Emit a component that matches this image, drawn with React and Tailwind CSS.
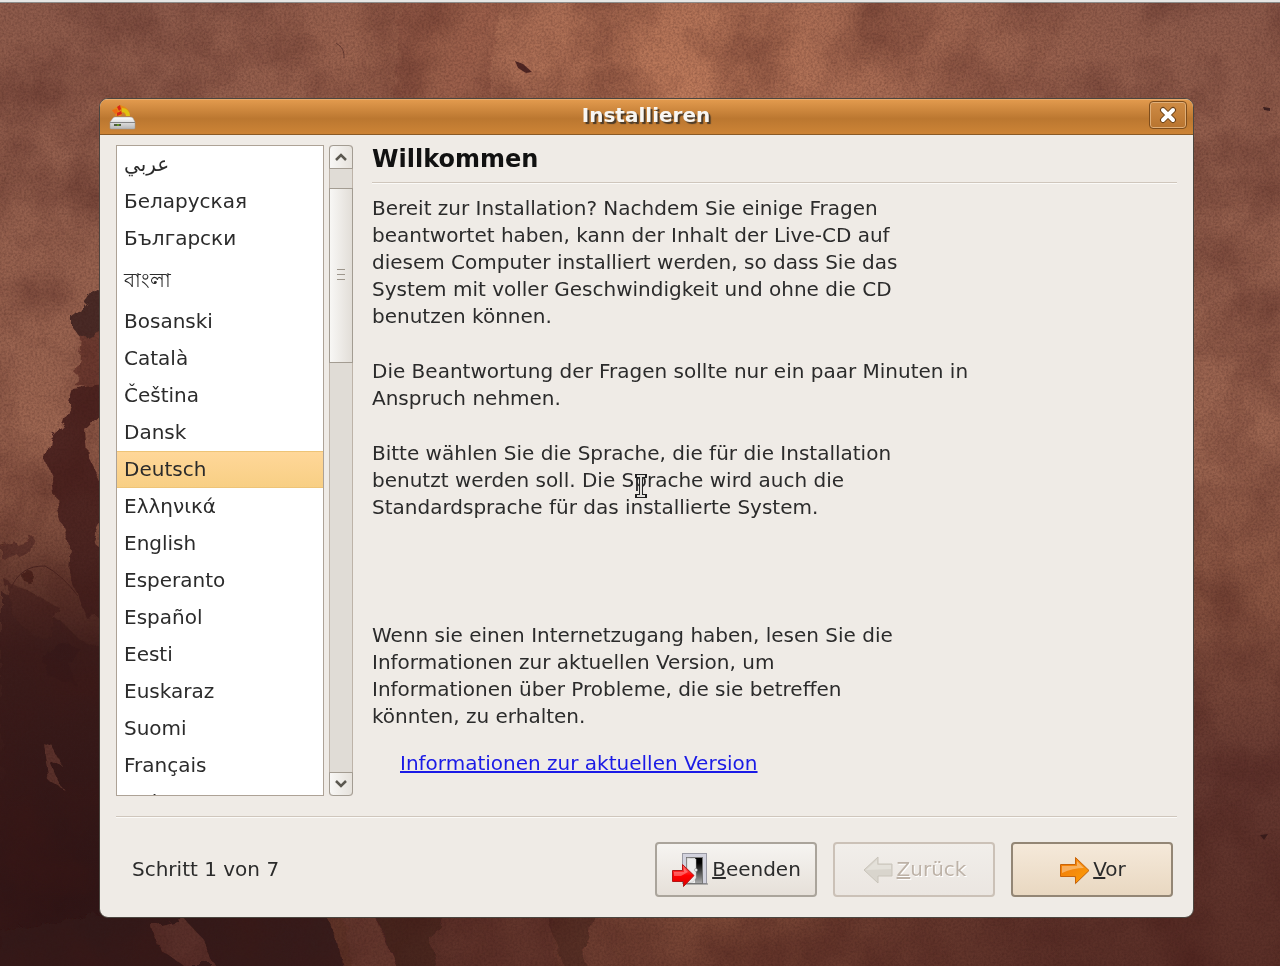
import React, { useState } from "react";

const languages = [
  "عربي",
  "Беларуская",
  "Български",
  "বাংলা",
  "Bosanski",
  "Català",
  "Čeština",
  "Dansk",
  "Deutsch",
  "Ελληνικά",
  "English",
  "Esperanto",
  "Español",
  "Eesti",
  "Euskaraz",
  "Suomi",
  "Français",
  "Galego",
];

function Wallpaper() {
  return (
    <svg
      className="absolute inset-0 h-full w-full"
      viewBox="0 0 1280 966"
      preserveAspectRatio="none"
      aria-hidden="true"
    >
      <defs>
        <linearGradient id="base" x1="0" y1="0" x2="0" y2="1">
          <stop offset="0" stopColor="#8e5b4b" />
          <stop offset="0.45" stopColor="#9d6651" />
          <stop offset="0.62" stopColor="#8a5542" />
          <stop offset="0.8" stopColor="#653830" />
          <stop offset="1" stopColor="#5a2f27" />
        </linearGradient>
        <radialGradient id="glow" gradientUnits="userSpaceOnUse" cx="680" cy="110" r="520">
          <stop offset="0" stopColor="#c07c5c" />
          <stop offset="0.5" stopColor="#ab6d54" stopOpacity="0.7" />
          <stop offset="1" stopColor="#9b614c" stopOpacity="0" />
        </radialGradient>
        <radialGradient id="glowBottom" gradientUnits="userSpaceOnUse" cx="720" cy="900" r="360">
          <stop offset="0" stopColor="#7e4a38" />
          <stop offset="1" stopColor="#6b3b2f" stopOpacity="0" />
        </radialGradient>
        <radialGradient id="shade" gradientUnits="userSpaceOnUse" cx="60" cy="900" r="420">
          <stop offset="0" stopColor="#2e1415" />
          <stop offset="0.6" stopColor="#371a19" stopOpacity="0.85" />
          <stop offset="1" stopColor="#4a241f" stopOpacity="0" />
        </radialGradient>
        <filter id="grain" x="0" y="0" width="100%" height="100%" colorInterpolationFilters="sRGB">
          <feTurbulence type="fractalNoise" baseFrequency="0.45" numOctaves="2" seed="4" />
          <feColorMatrix values="0 0 0 0 0.2  0 0 0 0 0.08  0 0 0 0 0.07  0.5 0 0 0 -0.17" />
        </filter>
        <filter id="cloud" x="0" y="0" width="100%" height="100%" colorInterpolationFilters="sRGB">
          <feTurbulence type="fractalNoise" baseFrequency="0.014" numOctaves="5" seed="9" />
          <feColorMatrix values="0 0 0 0 0.25  0 0 0 0 0.09  0 0 0 0 0.08  0.8 0 0 0 -0.3" />
        </filter>
        <filter id="rough" x="-10%" y="-10%" width="120%" height="120%">
          <feTurbulence type="fractalNoise" baseFrequency="0.06" numOctaves="3" seed="2" />
          <feDisplacementMap in="SourceGraphic" scale="14" />
        </filter>
      </defs>
      <rect width="1280" height="966" fill="url(#base)" />
      <rect width="1280" height="966" fill="url(#glow)" />
      <rect width="1280" height="966" fill="url(#glowBottom)" />
      <path d="M400 0H500L490 110H395Z" fill="#7b4236" opacity="0.25" filter="url(#rough)" />
      <g filter="url(#rough)">
        <path d="M0 590L22 600L40 618L62 622L80 640L110 650V966H0Z" fill="#46211e" opacity="0.8" />
        <path d="M5 580L30 592L60 608L48 640L28 632L10 612Z" fill="#603329" />
        <path d="M95 288L110 290V335L83 340L71 326L71 316L79 310Z" fill="#4a2a26" />
        <path d="M82 338L110 324V391L76 386L80 356Z" fill="#703c31" />
        <path
          d="M74 390L110 384V406L86 431L88 456L100 481L110 506L92 541L110 556V616L88 620L79 596L68 571L70 546L58 511L54 481L46 461L50 438L64 424Z"
          fill="#502723"
        />
        <path d="M0 546L34 536L30 552L14 560L0 558Z" fill="#6b3a30" />
        <circle cx="29" cy="577" r="6" fill="#54281f" />
        <path d="M50 650L62 642L82 650L70 665L76 685L60 680L44 672Z" fill="#35191a" />
      </g>
      <rect width="1280" height="966" fill="url(#shade)" />
      <g filter="url(#rough)">
        <path d="M0 930L100 915H345L352 970H0Z" fill="#331817" opacity="0.7" />
        <path d="M152 926L184 918L202 938L216 966L184 966L160 950Z" fill="#6b3d33" opacity="0.7" />
        <path d="M325 915H375L398 970H345L340 945Z" fill="#764335" opacity="0.6" />
        <path d="M376 915H440L432 945L436 970H398Z" fill="#42211d" opacity="0.7" />
        <path d="M440 915H550L560 970H440Z" fill="#5c3128" opacity="0.5" />
        <path d="M546 915H594L590 940L582 950L590 970H566Z" fill="#4a241f" opacity="0.6" />
        <path d="M42 742L52 745L64 768L50 762L62 788L48 780Z" fill="#6b3d33" opacity="0.7" />
      </g>
      <path d="M10 590Q20 565 45 566Q62 575 78 596" fill="none" stroke="#4b2521" />
      <path d="M336 43Q345 48 344 58" fill="none" stroke="#643a31" />
      <path d="M515 61L523 64L532 72L526 73L518 68Z" fill="#4f2623" />
      <path d="M1263 107L1270 108L1270 111L1264 110Z" fill="#3e2222" />
      <path d="M1260 835L1268 834L1264 840Z" fill="#391c1b" />
      <rect width="1280" height="966" filter="url(#cloud)" />
      <rect width="1280" height="966" filter="url(#grain)" />
    </svg>
  );
}

function InstallerIcon() {
  return (
    <svg width="28" height="28" viewBox="0 0 28 28" aria-hidden="true">
      <defs>
        <linearGradient id="drive" x1="0" y1="0" x2="0" y2="1">
          <stop offset="0" stopColor="#ffffff" />
          <stop offset="1" stopColor="#b5b5b5" />
        </linearGradient>
      </defs>
      <path d="M6 4L11 1L16 3Q21 6 21 12H17L14 8L12 12H6L7 9L3 7Z" fill="#e58a16" />
      <path d="M3 6L8 5L9 9L6 10Z" fill="#ee6b13" />
      <path d="M8 3L11 1L12 5L10 7Z M8 9L12 7L13 10L8 12Z" fill="#d92617" />
      <path d="M13 4Q20 4 21 12H17Q17 8 13 8Z" fill="#dfc312" />
      <path d="M4 14Q5 13 6 13H21Q23 13 24 14L26 18V24Q26 25 25 25H2Q1 25 1 24V18Z" fill="url(#drive)" stroke="#999" strokeWidth="0.5" />
      <path d="M1 18H26V19H1Z" fill="#858585" />
      <path d="M5 20H12V22H5Z" fill="#4d5d3b" />
      <path d="M8 20.5H10V21.5H8Z" fill="#79c614" />
    </svg>
  );
}

function ExitIcon() {
  return (
    <svg width="38" height="38" viewBox="0 0 38 38" aria-hidden="true">
      <defs>
        <linearGradient id="dark" x1="0" y1="0" x2="0" y2="1">
          <stop offset="0.2" stopColor="#000" />
          <stop offset="1" stopColor="#aaa" />
        </linearGradient>
        <linearGradient id="red" x1="0" y1="0" x2="0" y2="1">
          <stop offset="0" stopColor="#f66" />
          <stop offset="0.5" stopColor="#f00" />
          <stop offset="1" stopColor="#d00" />
        </linearGradient>
      </defs>
      <rect x="11.5" y="2.5" width="24" height="30" fill="#d3d3de" stroke="#9a9aa4" />
      <rect x="15.5" y="6.5" width="16" height="26" fill="#eee" stroke="#777" />
      <rect x="24" y="7" width="7" height="25" fill="url(#dark)" />
      <path d="M16 7L25 8V27L22 31L16 32Z" fill="#ececec" stroke="#bbb" strokeWidth="0.5" />
      <circle cx="25" cy="19" r="1.5" fill="#fff" stroke="#777" strokeWidth="0.5" />
      <path d="M12 33H37" stroke="#777" />
      <path d="M1.500 19.500H11.500V13.500L23 24.500L12.500 35.500V30.500H1.500Z" fill="url(#red)" stroke="#b41414" />
      <path d="M3 21H13V17L17 21L10 25H3Z" fill="#fff" opacity="0.3" />
    </svg>
  );
}

function BackIcon() {
  return (
    <svg width="32" height="32" viewBox="0 0 32 32" aria-hidden="true">
      <path d="M2 16L16 3V10H30V22H16V29Z" fill="#d9d5cd" stroke="#c9c4ba" />
      <path d="M4 16L15 6V11H29V15Z" fill="#e4e1da" />
    </svg>
  );
}

function ForwardIcon() {
  return (
    <svg width="32" height="32" viewBox="0 0 32 32" aria-hidden="true">
      <defs>
        <linearGradient id="orange" x1="0" y1="0" x2="1" y2="1">
          <stop offset="0" stopColor="#f57900" />
          <stop offset="0.5" stopColor="#f58a0c" />
          <stop offset="1" stopColor="#ffa000" />
        </linearGradient>
      </defs>
      <path d="M3 12L18 25L17 31L30 18" fill="#000" opacity="0.12" />
      <path d="M2.500 10.500H17.500V3.500L31 16.500L17.500 29.500V22.500H2.500Z" fill="url(#orange)" stroke="#c8640a" />
      <path d="M4 12H19V7L26 14Q15 14 4 19Z" fill="#fff" opacity="0.35" />
    </svg>
  );
}

function Chevron({ up }) {
  return (
    <svg width="12" height="8" viewBox="0 0 12 8" aria-hidden="true">
      <path d={up ? "M1 7L6 2L11 7" : "M1 1L6 6L11 1"} fill="none" stroke="#5b5850" strokeWidth="2.5" />
    </svg>
  );
}

function Scrollbar() {
  return (
    <div className="flex w-6 shrink-0 flex-col rounded-[4px] border-x border-[#bdb3a8] bg-[#e0dcd6]">
      <button
        aria-label="Nach oben"
        className="-mx-px flex h-6 items-center justify-center rounded-t-[4px] border border-[#a39c92] bg-linear-to-r from-[#f8f7f5] to-[#e6e2dc]"
      >
        <Chevron up />
      </button>
      <div className="flex-1 pt-[19px]">
        <div className="-mx-px flex h-[175px] flex-col items-center border border-[#a39c92] bg-linear-to-r from-[#f8f7f5] to-[#e2ded8] pt-20">
          <div className="flex flex-col gap-1">
            <span className="h-px w-2 bg-[#9d968c]" />
            <span className="h-px w-2 bg-[#9d968c]" />
            <span className="h-px w-2 bg-[#9d968c]" />
          </div>
        </div>
      </div>
      <button
        aria-label="Nach unten"
        className="-mx-px flex h-6 items-center justify-center rounded-b-[4px] border border-[#a39c92] bg-linear-to-r from-[#f8f7f5] to-[#e6e2dc]"
      >
        <Chevron />
      </button>
    </div>
  );
}

function LanguageList() {
  const [selected, setSelected] = useState("Deutsch");
  return (
    <ul className="w-52 shrink-0 overflow-hidden border border-[#ada296] bg-white [contain:size]">
      {languages.map((name) => (
        <li key={name}>
          <label
            className={
              "relative flex items-center px-[7px] " +
              (name === "বাংলা" ? "h-[46px] " : "h-[37px] ") +
              (name === selected ? "bg-linear-to-b from-[#ffd799] to-[#f8cf84] border-y border-[#eec477]" : "")
            }
          >
            <input
              type="radio"
              name="language"
              className="sr-only"
              checked={name === selected}
              onChange={() => setSelected(name)}
            />
            {name}
          </label>
        </li>
      ))}
    </ul>
  );
}

export default function App() {
  return (
    <div
      className="relative flex min-h-screen flex-col overflow-hidden bg-[#54291f] pt-[98px] pr-[86px] pb-12 pl-[99px] text-[20px] leading-[27px] text-[#2b2b2b]"
      style={{ fontFamily: '"DejaVu Sans", "Noto Sans", sans-serif' }}
    >
      <Wallpaper />
      <div className="absolute inset-x-0 top-0 h-[3px] border-b border-[#8d8c8a] bg-[#e6e6e4]" />

      <main className="relative flex flex-1 flex-col overflow-hidden rounded-[9px] border border-[#4b4640] bg-[#efebe6]">
        {/* title bar */}
        <header className="grid h-9 shrink-0 grid-cols-[48px_1fr_48px] items-start border-t border-b border-t-[#eaab6c] border-b-[#8a5a26] bg-linear-to-b from-[#e29a4d] via-[#bb7730] via-55% to-[#cd8436] pr-[6px] pl-[5px]">
          <div className="pt-1 pl-1">
            <InstallerIcon />
          </div>
          <h1 className="pt-[2px] text-center font-bold text-[#f8f6f2] [text-shadow:2px_2px_1px_#4a3a28]">Installieren</h1>
          <button
            aria-label="Schließen"
            className="mt-px flex h-7 w-[38px] items-center justify-center justify-self-end rounded-[4px] border border-[#7e4d1c] bg-linear-to-b from-[#cf8c45] to-[#b8742f] shadow-[inset_0_0_0_1px_#dfae78]"
          >
            <svg width="18" height="18" viewBox="0 0 18 18" aria-hidden="true">
              <path d="M4 4L14 14M14 4L4 14" stroke="#6b4218" strokeWidth="6" strokeLinecap="round" />
              <path d="M4 4L14 14M14 4L4 14" stroke="#fff" strokeWidth="4" strokeLinecap="round" />
            </svg>
          </button>
        </header>

        <div className="flex flex-1 px-4 pt-[10px]">
          <LanguageList />
          <div className="flex pl-[5px]">
            <Scrollbar />
          </div>
          <section className="flex-1 pl-[19px]">
            <h2 className="border-b border-[#cfc6bc] pb-2 text-[24px] leading-[29px] font-bold text-[#111] shadow-[0_1px_0_#fbfaf8]">
              Willkommen
            </h2>
            <div className="flex flex-col gap-7 pt-3">
              <p>
                Bereit zur Installation? Nachdem Sie einige Fragen
                <br />
                beantwortet haben, kann der Inhalt der Live-CD auf
                <br />
                diesem Computer installiert werden, so dass Sie das
                <br />
                System mit voller Geschwindigkeit und ohne die CD
                <br />
                benutzen können.
              </p>
              <p>
                Die Beantwortung der Fragen sollte nur ein paar Minuten in
                <br />
                Anspruch nehmen.
              </p>
              <p>
                Bitte wählen Sie die Sprache, die für die Installation
                <br />
                benutzt werden soll. Die Sprache wird auch die
                <br />
                Standardsprache für das installierte System.
              </p>
            </div>
            <p className="pt-[101px]">
              Wenn sie einen Internetzugang haben, lesen Sie die
              <br />
              Informationen zur aktuellen Version, um
              <br />
              Informationen über Probleme, die sie betreffen
              <br />
              könnten, zu erhalten.
            </p>
            <p className="pt-5 pl-7">
              <a href="#" className="text-[#1a1ae6] underline">
                Informationen zur aktuellen Version
              </a>
            </p>
          </section>
        </div>

        <footer className="mx-4 mt-5 flex items-center justify-between gap-4 border-t border-[#cfc6bc] pt-[25px] pr-1 pb-5 pl-4 shadow-[inset_0_1px_0_#fbfaf8]">
          <p>Schritt 1 von 7</p>
          <div className="flex gap-4">
            <button className="flex h-[55px] w-[162px] items-center justify-center gap-[3px] rounded-[4px] border-2 border-[#aaa49b] bg-linear-to-b from-[#f6f4f1] to-[#e6e0d9]">
              <ExitIcon />
              <span>
                <u>B</u>eenden
              </span>
            </button>
            <button
              disabled
              className="flex h-[55px] w-[162px] items-center justify-center gap-[3px] rounded-[4px] border-2 border-[#cbc1b7] bg-linear-to-b from-[#f1eeea] to-[#ebe6e1] text-[#bdb2a7] [text-shadow:1px_1px_0_#fff]"
            >
              <BackIcon />
              <span>
                <u>Z</u>urück
              </span>
            </button>
            <button className="flex h-[55px] w-[162px] items-center justify-center gap-[3px] rounded-[4px] border-2 border-[#938675] bg-linear-to-b from-[#f5e9da] to-[#e9d8c1]">
              <ForwardIcon />
              <span>
                <u>V</u>or
              </span>
            </button>
          </div>
        </footer>
      </main>

      {/* text cursor */}
      <svg className="absolute top-[473px] left-[634px]" width="14" height="26" viewBox="0 0 14 26" aria-hidden="true">
        <path d="M1 1H13V5H9V21H13V25H1V21H5V5H1Z" fill="#222" />
        <path d="M3 3H11M3 23H11M7 3V23" stroke="#e4e2de" strokeWidth="2" />
      </svg>
    </div>
  );
}
